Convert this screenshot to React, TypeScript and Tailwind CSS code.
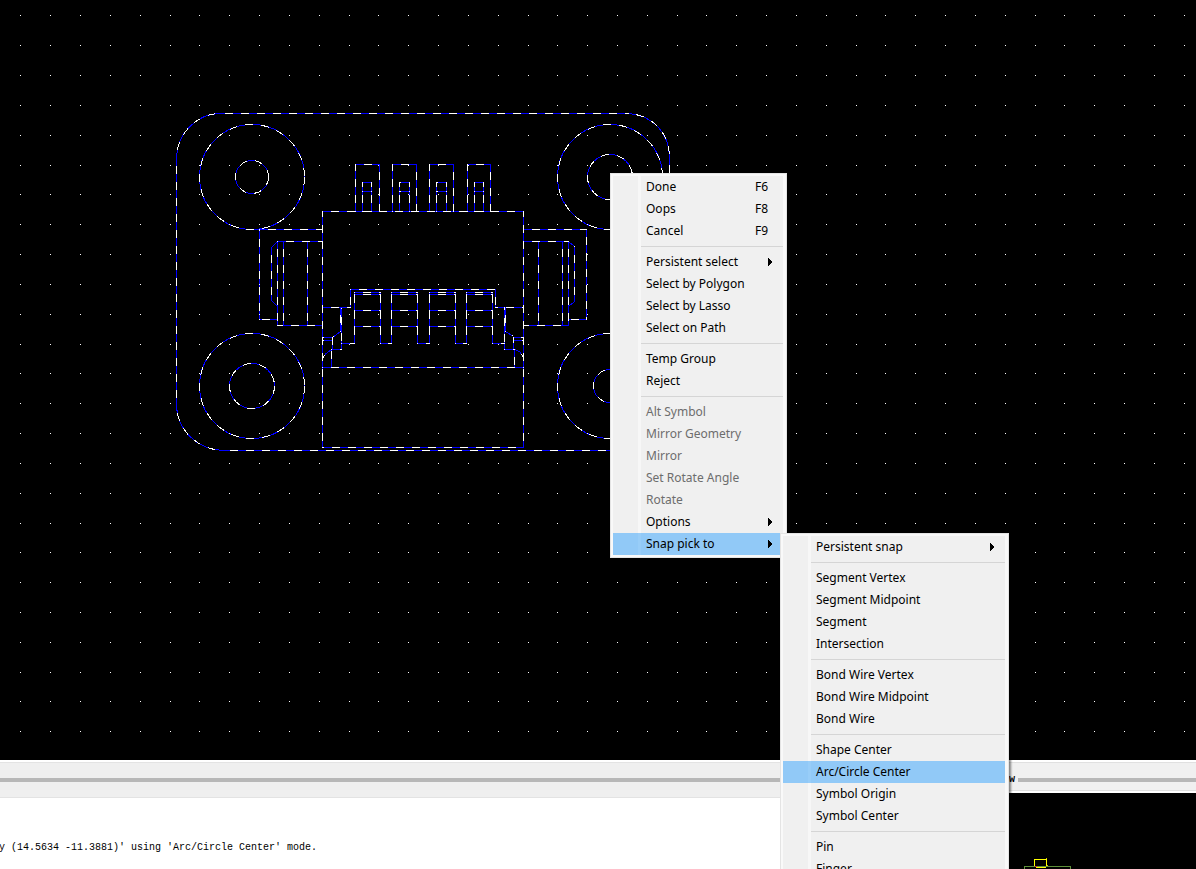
type Axis = 'h' | 'v';
// axis, fixed coordinate, start, end, coordinate at which a white dash begins
type Trace = [Axis, number, number, number, number];

const GRID_STEP = 29.83;

const outline: Trace[] = [
  ['h', 113, 220, 628, 225],
  ['h', 450, 222, 628, 230],
  ['v', 176, 158, 405, 166],
  ['v', 669, 158, 405, 165],
];

const body: Trace[] = [
  ['h', 211, 322, 523, 331],
  ['h', 447, 322, 523, 332],
  ['h', 367, 322, 523, 331],
  ['v', 322, 211, 447, 225],
  ['v', 523, 211, 447, 225],
];

const leftBracket: Trace[] = [
  ['h', 229, 259, 322, 284],
  ['v', 259, 229, 319, 239],
  ['h', 319, 259, 277, 262],
  ['h', 241, 277, 322, 286],
  ['v', 271, 247, 300, 255],
  ['v', 277, 241, 325, 249],
  ['v', 283, 241, 325, 249],
  ['v', 307, 241, 325, 249],
  ['h', 325, 277, 322, 291],
];

const rightBracket: Trace[] = [
  ['h', 229, 523, 586, 532],
  ['v', 586, 229, 319, 237],
  ['h', 319, 568, 586, 571],
  ['h', 241, 523, 568, 532],
  ['v', 574, 246, 301, 255],
  ['v', 538, 241, 325, 249],
  ['v', 562, 241, 325, 249],
  ['v', 568, 241, 325, 249],
  ['h', 325, 523, 568, 521],
];

const upperPins = [
  { left: 355, right: 379, innerLeft: 362, innerRight: 371, dash: 364 },
  { left: 392, right: 416, innerLeft: 399, innerRight: 409, dash: 401 },
  { left: 429, right: 453, innerLeft: 436, innerRight: 446, dash: 438 },
  { left: 467, right: 490, innerLeft: 474, innerRight: 483, dash: 476 },
].flatMap<Trace>((p) => [
  ['h', 164, p.left, p.right, p.dash],
  ['v', p.left, 164, 211, 163],
  ['v', p.right, 164, 211, 172],
  ['h', 182, p.innerLeft, p.innerRight, p.innerRight],
  ['h', 191, p.innerLeft, p.innerRight, p.innerRight],
  ['v', p.innerLeft, 182, 211, 179],
  ['v', p.innerRight, 182, 211, 179],
]);

const lowerPins = [
  { left: 354, right: 380, dash: 363, next: 391 },
  { left: 391, right: 417, dash: 400, next: 429 },
  { left: 429, right: 455, dash: 438, next: 466 },
  { left: 466, right: 492, dash: 475, next: 504 },
].flatMap<Trace>((p) => [
  ['h', 292, p.left, p.right, p.dash],
  ['h', 294, p.left, p.right, p.dash],
  ['h', 310, p.left, p.right, p.dash],
  ['h', 326, p.left, p.right, p.dash],
  ['v', p.left, 292, 343, 295],
  ['v', p.right, 292, 343, 295],
  ['h', 343, p.right, p.next, p.next - 3],
]);

const latches: Trace[] = [
  ['h', 289, 350, 495, 359],
  ['v', 350, 289, 307, 297],
  ['v', 495, 289, 307, 297],
  ['h', 307, 322, 350, 331],
  ['h', 307, 495, 523, 506],
  ['h', 343, 341, 354, 350],
  ['v', 340, 307, 331, 315],
  ['v', 341, 308, 349, 317],
  ['h', 337, 322, 332, 332],
  ['h', 340, 322, 332, 332],
  ['v', 332, 337, 349, 337],
  ['h', 349, 331, 341, 340],
  ['v', 331, 349, 367, 351],
  ['v', 504, 307, 349, 318],
  ['v', 505, 308, 331, 315],
  ['h', 337, 513, 523, 521],
  ['h', 340, 513, 523, 522],
  ['v', 513, 337, 349, 335],
  ['h', 349, 504, 514, 513],
  ['v', 514, 349, 367, 357],
];

const traces = [
  ...outline,
  ...body,
  ...leftBracket,
  ...rightBracket,
  ...upperPins,
  ...lowerPins,
  ...latches,
];

const curves = [
  'M176.5 158 C176.5 134 197 113.5 220 113.5',
  'M628 113.5 C652 115 669.5 132 669.5 158',
  'M176.5 405 C177 430 197 449 222 450.5',
  'M669.5 405 C669.5 432 652 450.5 628 450.5',
  'M277.5 241.5 L271.5 247.5',
  'M271.5 300.5 L277.5 306.5',
  'M568.5 241.5 L574.5 246.5',
  'M574.5 301.5 L568.5 306.5',
  'M340.5 331.5 L332.5 337.5',
  'M331.5 349.5 L325.5 354 L322.5 358.5',
  'M505.5 331.5 L513.5 336.5',
  'M514.5 349.5 L519.5 351.5 L523.5 357.5',
];

const circles = [
  { cx: 252, cy: 177, r: 52.5 },
  { cx: 252, cy: 177, r: 16.5 },
  { cx: 610, cy: 177, r: 52.5 },
  { cx: 610, cy: 177, r: 22.5 },
  { cx: 252, cy: 386, r: 52.5 },
  { cx: 252, cy: 386, r: 22.5 },
  { cx: 610, cy: 386, r: 52.5 },
  { cx: 610, cy: 386, r: 16.5 },
];

function tracePath([axis, at, from, to]: Trace) {
  return axis === 'h'
    ? `M${from} ${at + 0.5} H${to + 1}`
    : `M${at + 0.5} ${from} V${to + 1}`;
}

function dashOffset([, , from, , white]: Trace) {
  return (((from - white) % 16) + 16) % 16;
}

function gridPath() {
  let d = '';
  for (let row = 0; row < 25; row++) {
    for (let col = 0; col < 80; col++) {
      const x = Math.round(20.4 + GRID_STEP * col);
      const y = Math.round(15.4 + GRID_STEP * row);
      d += `M${x} ${y}h1v1h-1z`;
    }
  }
  return d;
}

function Board() {
  return (
    <svg
      className="block h-full w-full"
      fill="none"
      shapeRendering="crispEdges"
      aria-label="Board layout"
      role="img"
    >
      <g stroke="#0000ff">
        {traces.map((t, i) => (
          <path key={i} d={tracePath(t)} />
        ))}
        {curves.map((d) => (
          <path key={d} d={d} />
        ))}
        {circles.map((c, i) => (
          <circle key={i} {...c} />
        ))}
      </g>
      <g stroke="#ffffff" strokeDasharray="8 8">
        {traces.map((t, i) => (
          <path key={i} d={tracePath(t)} strokeDashoffset={dashOffset(t)} />
        ))}
        {curves.map((d) => (
          <path key={d} d={d} strokeDashoffset={8} />
        ))}
        {circles.map((c, i) => (
          <circle key={i} {...c} />
        ))}
      </g>
      <path d={gridPath()} fill="#ffffff" />
    </svg>
  );
}

interface Item {
  label: string;
  shortcut?: string;
  submenu?: boolean;
  disabled?: boolean;
  active?: boolean;
}

const contextMenu: Item[][] = [
  [
    { label: 'Done', shortcut: 'F6' },
    { label: 'Oops', shortcut: 'F8' },
    { label: 'Cancel', shortcut: 'F9' },
  ],
  [
    { label: 'Persistent select', submenu: true },
    { label: 'Select by Polygon' },
    { label: 'Select by Lasso' },
    { label: 'Select on Path' },
  ],
  [{ label: 'Temp Group' }, { label: 'Reject' }],
  [
    { label: 'Alt Symbol', disabled: true },
    { label: 'Mirror Geometry', disabled: true },
    { label: 'Mirror', disabled: true },
    { label: 'Set Rotate Angle', disabled: true },
    { label: 'Rotate', disabled: true },
    { label: 'Options', submenu: true },
    { label: 'Snap pick to', submenu: true, active: true },
  ],
];

const snapMenu: Item[][] = [
  [{ label: 'Persistent snap', submenu: true }],
  [
    { label: 'Segment Vertex' },
    { label: 'Segment Midpoint' },
    { label: 'Segment' },
    { label: 'Intersection' },
  ],
  [
    { label: 'Bond Wire Vertex' },
    { label: 'Bond Wire Midpoint' },
    { label: 'Bond Wire' },
  ],
  [
    { label: 'Shape Center' },
    { label: 'Arc/Circle Center', active: true },
    { label: 'Symbol Origin' },
    { label: 'Symbol Center' },
  ],
  [{ label: 'Pin' }, { label: 'Finger' }],
];

function MenuItem({ item }: { item: Item }) {
  return (
    <button
      type="button"
      role="menuitem"
      disabled={item.disabled}
      aria-haspopup={item.submenu ? 'menu' : undefined}
      className={`flex h-[22px] w-full items-stretch text-left text-black disabled:text-[#6d6d6d] ${
        item.active ? 'bg-[#91c9f7]' : ''
      }`}
    >
      <span className={`ml-[25px] w-[3px] ${item.active ? 'bg-[#98cdf8]' : 'bg-[#f7f7f7]'}`} />
      <span className="flex-1 pl-[5px] leading-[22px] whitespace-nowrap">{item.label}</span>
      {item.shortcut && <span className="w-7 leading-[22px]">{item.shortcut}</span>}
      {item.submenu && (
        <svg
          className="mr-[10px] h-[22px] w-[5px]"
          viewBox="0 0 5 22"
          shapeRendering="crispEdges"
          aria-hidden="true"
        >
          <path d="M0 7h1v1h1v1h1v1h1v2h-1v1h-1v1h-1v1h-1z" fill="#000000" />
        </svg>
      )}
    </button>
  );
}

function Menu({ groups, label, className }: { groups: Item[][]; label: string; className: string }) {
  return (
    <div
      role="menu"
      aria-label={label}
      className={`absolute border border-[#e4e4e4] bg-[#f9f9f9] py-[2px] pr-[3px] pl-[2px] font-['Noto_Sans',sans-serif] text-[12px] shadow-[2px_2px_2px_rgba(0,0,0,0.45)] ${className}`}
    >
      {groups.map((group, i) => (
        <div key={group[0].label} className="bg-[#f0f0f0]">
          {i > 0 && (
            <div role="separator" className="flex h-[9px]">
              <span className="ml-[25px] w-[3px] bg-[#f7f7f7]" />
              <span className="mt-1 h-px flex-1 bg-[#d5d5d5]" />
            </div>
          )}
          {group.map((item) => (
            <MenuItem key={item.label} item={item} />
          ))}
        </div>
      ))}
    </div>
  );
}

function CommandLog() {
  return (
    <section className="flex min-w-0 flex-1 flex-col bg-white">
      <header className="mt-[2px] flex h-9 items-center border-t border-b border-[#e3e3e3] bg-[#efefef]">
        <div className="h-1 w-full bg-[#b7b7b7]" />
      </header>
      <p className="-ml-px mt-[41px] font-['Liberation_Mono',monospace] text-[10px] leading-[18px] whitespace-pre text-black">
        y (14.5634 -11.3881)' using 'Arc/Circle Center' mode.
      </p>
    </section>
  );
}

function Overview() {
  return (
    <section className="flex w-[187px] flex-col bg-black">
      <header className="border-t-2 border-b-2 border-white">
        <div className="flex h-[29px] items-center gap-[3px] border-t border-b border-[#e0e0e0] bg-[#f0f0f0] pt-[7px]">
          <h2 className="font-['Liberation_Mono',monospace] text-[10px] leading-none font-bold text-black">
            w
          </h2>
          <div className="h-1 flex-1 bg-[#b7b7b7]" />
        </div>
      </header>
      <svg className="block w-full flex-1" fill="none" shapeRendering="crispEdges" aria-hidden="true">
        <path d="M15.5 76V73.5H61.5V76" stroke="#5f8f3a" />
        <path d="M25.5 73V66.5H37.5V73" stroke="#ffff00" />
        <path d="M27 74.5H37" stroke="#ffff00" />
        <path d="M37 65.5H38M38 72.5H39" stroke="#c8c800" />
        <path d="M26 73.5H28" stroke="#e03030" />
      </svg>
    </section>
  );
}

export default function App() {
  return (
    <main className="relative flex h-screen flex-col overflow-hidden bg-black">
      <section className="min-h-0 flex-1">
        <Board />
      </section>
      <div className="flex h-[109px]">
        <CommandLog />
        <Overview />
      </div>
      <Menu groups={contextMenu} label="Context menu" className="top-[173px] left-[610px] w-[177px]" />
      <Menu groups={snapMenu} label="Snap pick to" className="top-[533px] left-[780px] w-[229px]" />
    </main>
  );
}
